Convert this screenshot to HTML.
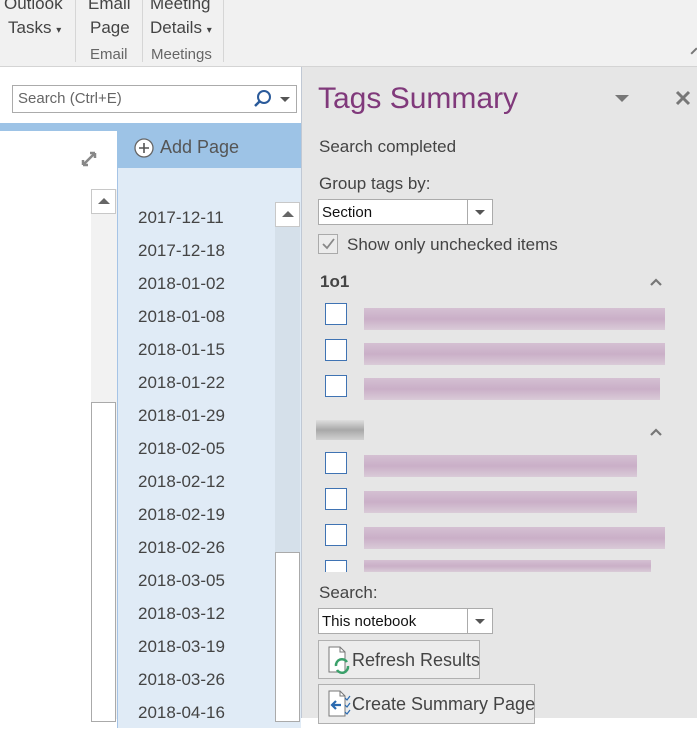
<!DOCTYPE html>
<html><head><meta charset="utf-8"><style>
*{margin:0;padding:0;box-sizing:border-box}
body{width:697px;height:718px;overflow:hidden;position:relative;font-family:"Liberation Sans",sans-serif;background:#fff;color:#444}
.a{position:absolute}
.rib{left:0;top:0;width:697px;height:67px;background:#f1f1f1;border-bottom:1px solid #d4d4d4}
.rt{font-size:17px;color:#444;text-align:center;line-height:22px}
.sep{top:0;width:1px;height:62px;background:#d6d6d6}
.date{left:138px;font-size:17px;color:#444}
.cb{width:22px;height:22px;border:1px solid #3f73b3;background:#fff}
.bl{height:22px;background:
linear-gradient(#d3bcd0,#c7a9c4 50%,#d8c8d6);opacity:.9}
.txt{font-size:17px;color:#444}
.drop{background:#fff;border:1px solid #ababab;height:26px;font-size:15px;color:#111;padding:4px 3px}
.tri{width:0;height:0;border-left:5px solid transparent;border-right:5px solid transparent;border-top:5px solid #555}
</style></head><body>
<div class="a rib"></div>
<div class="a rt" style="left:4px;top:-7px">Outlook</div>
<div class="a rt" style="left:8px;top:17px">Tasks <span style="font-size:10px">▾</span></div>
<div class="a sep" style="left:75px"></div>
<div class="a rt" style="left:88px;top:-7px">Email</div>
<div class="a rt" style="left:90px;top:17px">Page</div>
<div class="a rt" style="left:90px;top:44px;font-size:15px;color:#666">Email</div>
<div class="a sep" style="left:142px"></div>
<div class="a rt" style="left:150px;top:-7px">Meeting</div>
<div class="a rt" style="left:150px;top:17px">Details <span style="font-size:10px">▾</span></div>
<div class="a rt" style="left:151px;top:44px;font-size:15px;color:#666">Meetings</div>
<div class="a sep" style="left:223px"></div>
<div class="a" style="left:690px;top:50px;width:8px;height:2px;background:#777;transform:rotate(-45deg)"></div>

<!-- search -->
<div class="a" style="left:12px;top:85px;width:285px;height:28px;border:1px solid #ababab;background:#fff"></div>
<div class="a" style="left:18px;top:90px;font-size:15px;color:#666">Search (Ctrl+E)</div>
<svg class="a" style="left:252px;top:88px" width="22" height="22"><circle cx="12" cy="9" r="6" fill="none" stroke="#2a5a9a" stroke-width="2"/><line x1="8" y1="13" x2="3" y2="18" stroke="#2a5a9a" stroke-width="2.5"/></svg>
<div class="a tri" style="left:280px;top:97px"></div>

<!-- blue band -->
<div class="a" style="left:0;top:123px;width:301px;height:45px;background:#9dc3e6"></div>
<div class="a" style="left:0;top:131px;width:117px;height:600px;background:#fff"></div>
<svg class="a" style="left:80px;top:150px" width="18" height="18"><path d="M3 15L15 3M3 15v-5M3 15h5M15 3v5M15 3h-5" stroke="#888" stroke-width="2.5" fill="none"/></svg>
<svg class="a" style="left:133px;top:137px" width="22" height="22"><circle cx="11" cy="11" r="9" fill="#fff" stroke="#666" stroke-width="1.3"/><path d="M11 6v10M6 11h10" stroke="#555" stroke-width="1.6"/></svg>
<div class="a" style="left:160px;top:137px;font-size:18px;color:#555">Add Page</div>

<!-- left scrollbar -->
<div class="a" style="left:91px;top:189px;width:26px;height:530px;background:#f2f2f2"></div>
<div class="a" style="left:91px;top:189px;width:25px;height:25px;border:1px solid #c8c8c8;background:#fff"></div>
<div class="a" style="left:98px;top:198px;width:0;height:0;border-left:6px solid transparent;border-right:6px solid transparent;border-bottom:6px solid #666"></div>
<div class="a" style="left:91px;top:402px;width:25px;height:320px;border:1px solid #aaa;background:#fff"></div>

<!-- page list -->
<div class="a" style="left:117px;top:168px;width:184px;height:560px;background:#e0ebf6;border-left:1px solid #a6c4e6"></div>
<div class="a" style="left:275px;top:202px;width:25px;height:350px;background:#d5e0ea"></div>
<div class="a" style="left:275px;top:202px;width:25px;height:25px;border:1px solid #c8c8c8;background:#fff"></div>
<div class="a" style="left:282px;top:211px;width:0;height:0;border-left:6px solid transparent;border-right:6px solid transparent;border-bottom:6px solid #666"></div>
<div class="a" style="left:275px;top:552px;width:25px;height:170px;border:1px solid #aaa;background:#fff"></div>
<div class="a date" style="top:208px">2017-12-11</div>
<div class="a date" style="top:241px">2017-12-18</div>
<div class="a date" style="top:274px">2018-01-02</div>
<div class="a date" style="top:307px">2018-01-08</div>
<div class="a date" style="top:340px">2018-01-15</div>
<div class="a date" style="top:373px">2018-01-22</div>
<div class="a date" style="top:406px">2018-01-29</div>
<div class="a date" style="top:439px">2018-02-05</div>
<div class="a date" style="top:472px">2018-02-12</div>
<div class="a date" style="top:505px">2018-02-19</div>
<div class="a date" style="top:538px">2018-02-26</div>
<div class="a date" style="top:571px">2018-03-05</div>
<div class="a date" style="top:604px">2018-03-12</div>
<div class="a date" style="top:637px">2018-03-19</div>
<div class="a date" style="top:670px">2018-03-26</div>
<div class="a date" style="top:703px">2018-04-16</div>

<!-- right pane -->
<div class="a" style="left:301px;top:67px;width:396px;height:651px;background:#e6e6e6;border-left:1px solid #c0c8d4"></div>
<div class="a" style="left:318px;top:82px;font-size:30px;color:#80397b">Tags Summary</div>
<div class="a" style="left:615px;top:95px;width:0;height:0;border-left:7px solid transparent;border-right:7px solid transparent;border-top:7px solid #777"></div>
<svg class="a" style="left:675px;top:90px" width="16" height="16"><path d="M2 2L14 14M14 2L2 14" stroke="#777" stroke-width="3"/></svg>
<div class="a txt" style="left:319px;top:137px">Search completed</div>
<div class="a txt" style="left:319px;top:174px">Group tags by:</div>
<div class="a drop" style="left:318px;top:199px;width:175px">Section</div>
<div class="a" style="left:467px;top:200px;width:1px;height:24px;background:#ababab"></div>
<div class="a tri" style="left:475px;top:210px"></div>
<div class="a" style="left:318px;top:234px;width:20px;height:20px;border:1px solid #aaa;background:#ececec"></div>
<svg class="a" style="left:320px;top:236px" width="16" height="16"><path d="M3 8l4 4 7-9" stroke="#888" stroke-width="1.8" fill="none"/></svg>
<div class="a txt" style="left:347px;top:235px">Show only unchecked items</div>
<div class="a" style="left:320px;top:272px;font-size:17px;font-weight:bold;color:#444">1o1</div>
<svg class="a" style="left:650px;top:278px" width="12" height="8"><path d="M1 7l5-5 5 5" stroke="#777" stroke-width="2.2" fill="none"/></svg>
<div class="a cb" style="left:325px;top:303px"></div><div class="a bl" style="left:364px;top:308px;width:301px"></div>
<div class="a cb" style="left:325px;top:339px"></div><div class="a bl" style="left:364px;top:343px;width:301px"></div>
<div class="a cb" style="left:325px;top:375px"></div><div class="a bl" style="left:364px;top:378px;width:296px"></div>
<div class="a" style="left:316px;top:420px;width:48px;height:20px;background:linear-gradient(#ddd,#999 50%,#ccc);opacity:.8"></div>
<svg class="a" style="left:650px;top:428px" width="12" height="8"><path d="M1 7l5-5 5 5" stroke="#777" stroke-width="2.2" fill="none"/></svg>
<div class="a cb" style="left:325px;top:452px"></div><div class="a bl" style="left:364px;top:455px;width:273px"></div>
<div class="a cb" style="left:325px;top:488px"></div><div class="a bl" style="left:364px;top:491px;width:273px"></div>
<div class="a cb" style="left:325px;top:524px"></div><div class="a bl" style="left:364px;top:527px;width:301px"></div>
<div class="a" style="left:325px;top:560px;width:22px;height:12px;border:1px solid #3f73b3;border-bottom:none;background:#fff"></div>
<div class="a bl" style="left:364px;top:560px;width:287px;height:12px"></div>
<div class="a txt" style="left:319px;top:583px">Search:</div>
<div class="a drop" style="left:318px;top:608px;width:175px">This notebook</div>
<div class="a" style="left:467px;top:609px;width:1px;height:24px;background:#ababab"></div>
<div class="a tri" style="left:475px;top:619px"></div>
<div class="a" style="left:318px;top:640px;width:162px;height:39px;border:1px solid #b0b0b0;background:#ececec"></div>
<svg class="a" style="left:326px;top:645px" width="26" height="30"><path d="M3 2h11l5 5v20H3z" fill="#fff" stroke="#777"/><path d="M14 2v5h5" fill="none" stroke="#777"/><path d="M10 21a6 6 0 0 1 11-4M22 21a6 6 0 0 1-11 4" stroke="#3aa06a" stroke-width="2.5" fill="none"/></svg>
<div class="a" style="left:352px;top:650px;font-size:18px;color:#444">Refresh Results</div>
<div class="a" style="left:318px;top:684px;width:217px;height:40px;border:1px solid #b0b0b0;background:#ececec"></div>
<svg class="a" style="left:326px;top:689px" width="26" height="30"><path d="M3 2h11l5 5v20H3z" fill="#fff" stroke="#777"/><path d="M14 2v5h5" fill="none" stroke="#777"/><path d="M15 16H6M10 12l-4 4 4 4" stroke="#2a6ab0" stroke-width="2.2" fill="none"/><path d="M19 9l2 2 3-4M19 16l2 2 3-4M19 23l2 2 3-4" stroke="#2a6ab0" stroke-width="1.2" fill="none"/></svg>
<div class="a" style="left:352px;top:694px;font-size:18px;color:#444">Create Summary Page</div>
</body></html>
